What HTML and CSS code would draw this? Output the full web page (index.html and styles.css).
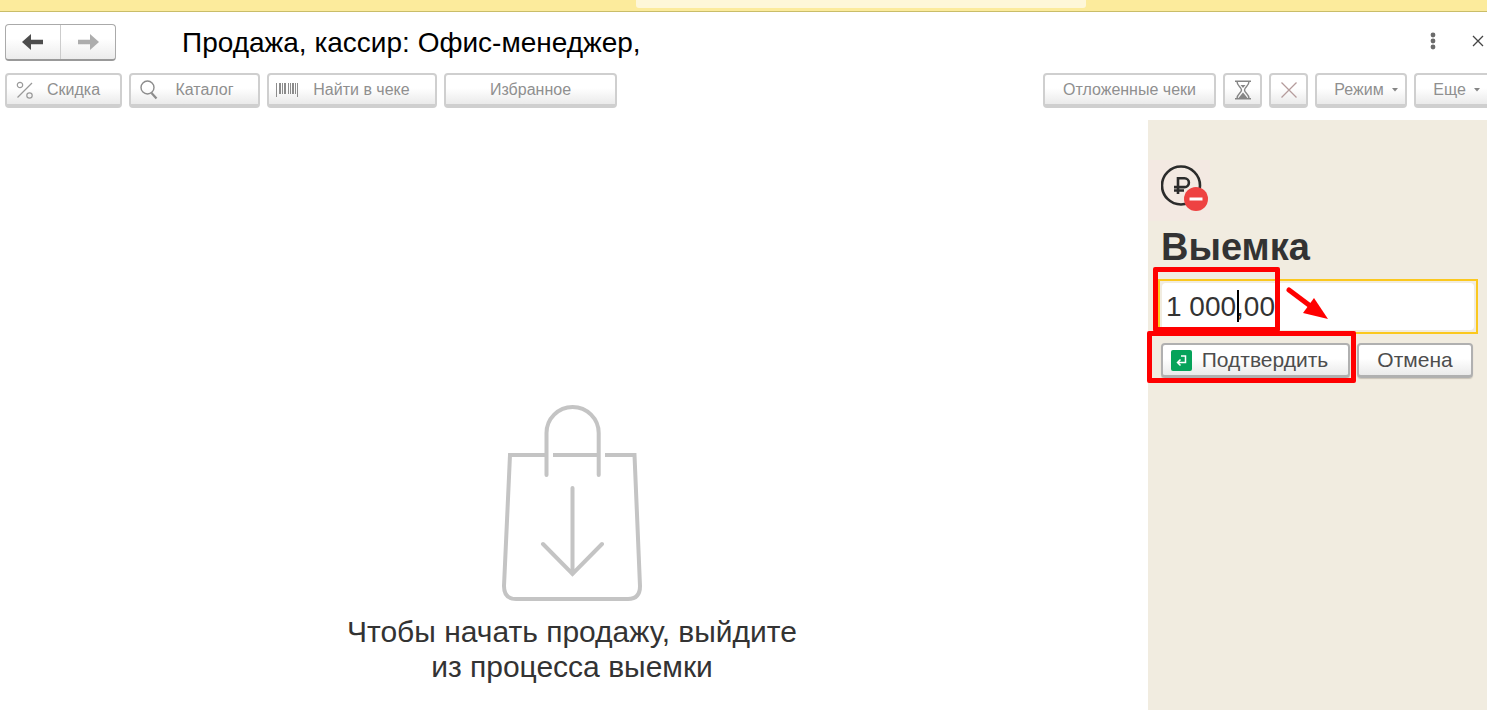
FILE: index.html
```html
<!DOCTYPE html>
<html lang="ru">
<head>
<meta charset="utf-8">
<title>Продажа</title>
<link rel="stylesheet" href="styles.css">
</head>
<body>
<div class="strip"><div class="strip-search"></div></div>
<header class="titlebar">
  <div class="nav">
    <button class="nav-btn" aria-label="Назад"><svg width="22" height="16" viewBox="0 0 22 16"><path d="M0 8 9 0V5.800H21V10.200H9V16Z" fill="#4d4d4d"/></svg></button>
    <button class="nav-btn" aria-label="Вперед"><svg width="22" height="16" viewBox="0 0 22 16"><path d="M22 8 13 0V5.800H1V10.200H13V16Z" fill="#adadad"/></svg></button>
  </div>
  <h1 class="title">Продажа, кассир: Офис-менеджер,</h1>
  <div class="window-tools">
    <button class="plain" aria-label="Меню"><svg width="8" height="18" viewBox="0 0 8 18" fill="#6b6b6b"><circle cx="4" cy="3" r="2.400"/><circle cx="4" cy="9" r="2.400"/><circle cx="4" cy="15" r="2.400"/></svg></button>
    <button class="plain" aria-label="Закрыть"><svg width="12" height="12" viewBox="0 0 12 12"><path d="M1 1 11 11M11 1 1 11" stroke="#444" stroke-width="1.300"/></svg></button>
  </div>
</header>
<nav class="toolbar">
  <button class="btn w-discount"><svg width="18" height="18" viewBox="0 0 18 18" fill="none" stroke="#999" stroke-width="1.200"><path d="M1.500 16.500 16 2"/><circle cx="4" cy="4" r="2.700"/><circle cx="13.500" cy="14.500" r="2.700"/></svg><span class="label">Скидка</span></button>
  <button class="btn w-catalog"><svg width="18" height="20" viewBox="0 0 18 20" fill="none" stroke="#8c8c8c"><circle cx="7.500" cy="7.500" r="6.500" stroke-width="1.400"/><path d="m11.500 13 5 5.500" stroke-width="2.200"/></svg><span class="label">Каталог</span></button>
  <button class="btn w-find"><svg width="22" height="16" viewBox="0 0 22 16" fill="#8c8c8c"><path d="M0 1h1v14H0zM3 1h2v11H3zM6 1h1v11H6zM8 1h2v11H8zM12 1h1v11h-1zM14 1h1v11h-1zM16 1h2v11h-2zM19 1h1v11h-1zM21 1h1v14h-1z"/></svg><span class="label">Найти в чеке</span></button>
  <button class="btn w-wide"><span class="label">Избранное</span></button>
  <span class="spacer"></span>
  <button class="btn w-wide"><span class="label">Отложенные чеки</span></button>
  <button class="btn w-icon" aria-label="Отложить"><svg width="18" height="20" viewBox="0 0 18 20" fill="none" stroke="#858585" stroke-width="1.400"><path d="M1 1.200h16M1 18.800h16M3 1.500C3 6 7.500 7 7.500 10S3 14 3 18.500M15 1.500C15 6 10.500 7 10.500 10s4.500 4 4.500 8.500"/><path d="M6.500 5h5L9 8ZM9 12.500l4.500 5.500h-9Z" fill="#858585" stroke="none"/></svg></button>
  <button class="btn w-icon" aria-label="Очистить"><svg width="18" height="18" viewBox="0 0 18 18"><path d="m1.500 1.500 15 15m0-15-15 15" stroke="#b59c9c" stroke-width="1.300"/></svg></button>
  <button class="btn w-mode"><span class="label">Режим</span><svg width="6" height="4" viewBox="0 0 6 4"><path d="M0 0h6L3 3.500Z" fill="#858585"/></svg></button>
  <button class="btn w-more"><span class="label">Еще</span><svg width="6" height="4" viewBox="0 0 6 4"><path d="M0 0h6L3 3.500Z" fill="#858585"/></svg></button>
</nav>
<div class="content">
  <main class="empty">
    <svg width="142" height="200" viewBox="0 0 142 200" fill="none" stroke="#c4c4c4" stroke-width="4" stroke-linecap="round"><path d="M45.500 72V30a26 26 0 0 1 52.200 0V72"/><path d="M44 52H9L3 183q0 13 12 13H127q12 0 12-13L133.500 52H104M52 52H97" stroke-linecap="butt"/><path d="M71.500 85V171M42 141 71.500 171 101 141"/></svg>
    <p class="hint">Чтобы начать продажу, выйдите<br>из процесса выемки</p>
  </main>
  <aside class="panel">
    <div class="cash-icon"><svg width="48" height="48" viewBox="0 0 48 48" fill="none"><circle cx="20" cy="20.500" r="19" stroke="#2b2b2b" stroke-width="2.600"/><path d="M17 29V13.300h6.500a4.400 4.400 0 0 1 0 8.800H13M13 25.500h10" stroke="#2b2b2b" stroke-width="2.600"/><circle cx="35" cy="34" r="12" fill="#ee4242"/><path d="M28.500 34h13" stroke="#fff" stroke-width="3"/></svg></div>
    <h2 class="heading"><label for="sum">Выемка</label></h2>
    <div class="field">
      <input class="sum" id="sum" type="text" value="1 000,00">
      <span class="caret"></span>
    </div>
    <div class="actions">
      <button class="btn action confirm"><svg width="21" height="21" viewBox="0 0 21 21" fill="none"><rect width="21" height="21" rx="2" fill="#06a35a"/><path d="M10 6H14.500V12.500H7M9.500 9.500l-3 3 3 3" stroke="#fff" stroke-width="1.500"/></svg><span class="label">Подтвердить</span></button>
      <button class="btn action cancel"><span class="label">Отмена</span></button>
    </div>
    <div class="mark mark-sum"></div>
    <div class="mark mark-confirm"></div>
    <svg class="arrow" width="46" height="36" viewBox="0 0 46 36"><path d="M4 4 24 19" stroke="#f00" stroke-width="5" stroke-linecap="round"/><path d="M29 12 43 33 18 27Z" fill="#f00"/></svg>
  </aside>
</div>
</body>
</html>
```
FILE: styles.css
```css
* { box-sizing: border-box; }
body {
  margin: 0;
  min-height: 100vh;
  display: flex;
  flex-direction: column;
  background: #fff;
  color: #333;
  font-family: "Liberation Sans", Arial, sans-serif;
  overflow-x: hidden;
}
button { font-family: inherit; padding: 0; cursor: pointer; }
svg { display: block; flex: none; }

.strip {
  display: flex;
  justify-content: center;
  height: 12px;
  padding-left: 235px;
  background: #fceb9c;
  border-bottom: 1px solid #c9bd69;
}
.strip-search { width: 450px; height: 8px; background: #fef7d9; border-radius: 0 0 3px 3px; }

.titlebar { display: flex; align-items: center; height: 61px; padding: 0 3px 0 5px; }
.nav {
  display: flex;
  width: 111px;
  height: 37px;
  border: 1px solid #aaa;
  border-bottom: 2px solid #999;
  border-radius: 4px;
  background: linear-gradient(#fff 40%, #ececec);
}
.nav-btn { flex: 1; display: flex; align-items: center; justify-content: center; border: 0; background: none; }
.nav-btn + .nav-btn { border-left: 1px solid #ccc; }
.title { margin: 0 auto 0 66px; font-size: 28px; line-height: 36px; font-weight: 400; color: #000; }
.window-tools { display: flex; align-items: center; gap: 35px; padding-bottom: 3px; }
.plain { border: 0; background: none; }

.toolbar { display: flex; gap: 7px; height: 47px; padding-left: 5px; align-items: flex-start; }
.spacer { flex: 1; }
.btn {
  display: flex;
  align-items: center;
  height: 35px;
  border: 2px solid #cfcfcf;
  border-bottom-width: 4px;
  border-radius: 4px;
  background: linear-gradient(#fff 45%, #eaeaea);
  color: #8f8f8f;
  font-size: 16px;
}
.label { flex: 1; text-align: center; white-space: nowrap; }
.w-discount { width: 117px; padding: 0 7px 0 9px; }
.w-catalog { width: 131px; padding: 0 7px 0 9px; }
.w-find { width: 170px; padding: 0 10px 0 7px; }
.w-wide { width: 173px; }
.w-icon { width: 39px; justify-content: center; }
.w-mode { width: 92px; padding: 0 7px 0 9px; }
.w-more { width: 73px; padding: 0 7px 0 9px; border-right: 0; border-radius: 4px 0 0 4px; }

.content { flex: 1; display: flex; }
.empty { flex: 1; display: flex; flex-direction: column; align-items: center; padding: 283px 4px 0 0; }
.hint { margin: 11px 0 0; text-align: center; font-size: 30px; line-height: 35px; }

.panel { position: relative; width: 339px; padding-top: 40px; background: #f1ece0; }
.cash-icon { width: 62px; height: 61px; padding: 5px 0 0 13px; background: #f3e9e2; }
.heading { margin: 4px 0 0 13px; font-size: 38px; line-height: 44px; font-weight: 700; }
.field {
  position: relative;
  height: 55px;
  margin: 10px 9px 0 10px;
  padding: 2px;
  border: 2px solid #fbc81e;
}
.sum {
  display: block;
  width: 100%;
  height: 100%;
  padding: 0 4px;
  border: 0;
  border-radius: 4px;
  outline: 0;
  background: #fff;
  color: #333;
  font-family: inherit;
  font-size: 28px;
}
.caret { position: absolute; left: 77px; top: 9px; width: 2px; height: 32px; background: #000; }
.actions { display: flex; gap: 7px; margin: 9px 14px 0 13px; }
.action { border-color: #b0b0b0; border-bottom-width: 3px; color: #4d4d4d; font-size: 21px; box-shadow: 0 1px 1px #c9c4b8; }
.confirm { width: 189px; padding: 0 10px 0 8px; }
.cancel { flex: 1; }
.mark { position: absolute; border: 5px solid #f00; border-radius: 2px; }
.mark-sum { left: 5px; top: 147px; width: 127px; height: 65px; }
.mark-confirm { left: -1px; top: 211px; width: 209px; height: 52px; }
.arrow { position: absolute; left: 137px; top: 166px; }
```
